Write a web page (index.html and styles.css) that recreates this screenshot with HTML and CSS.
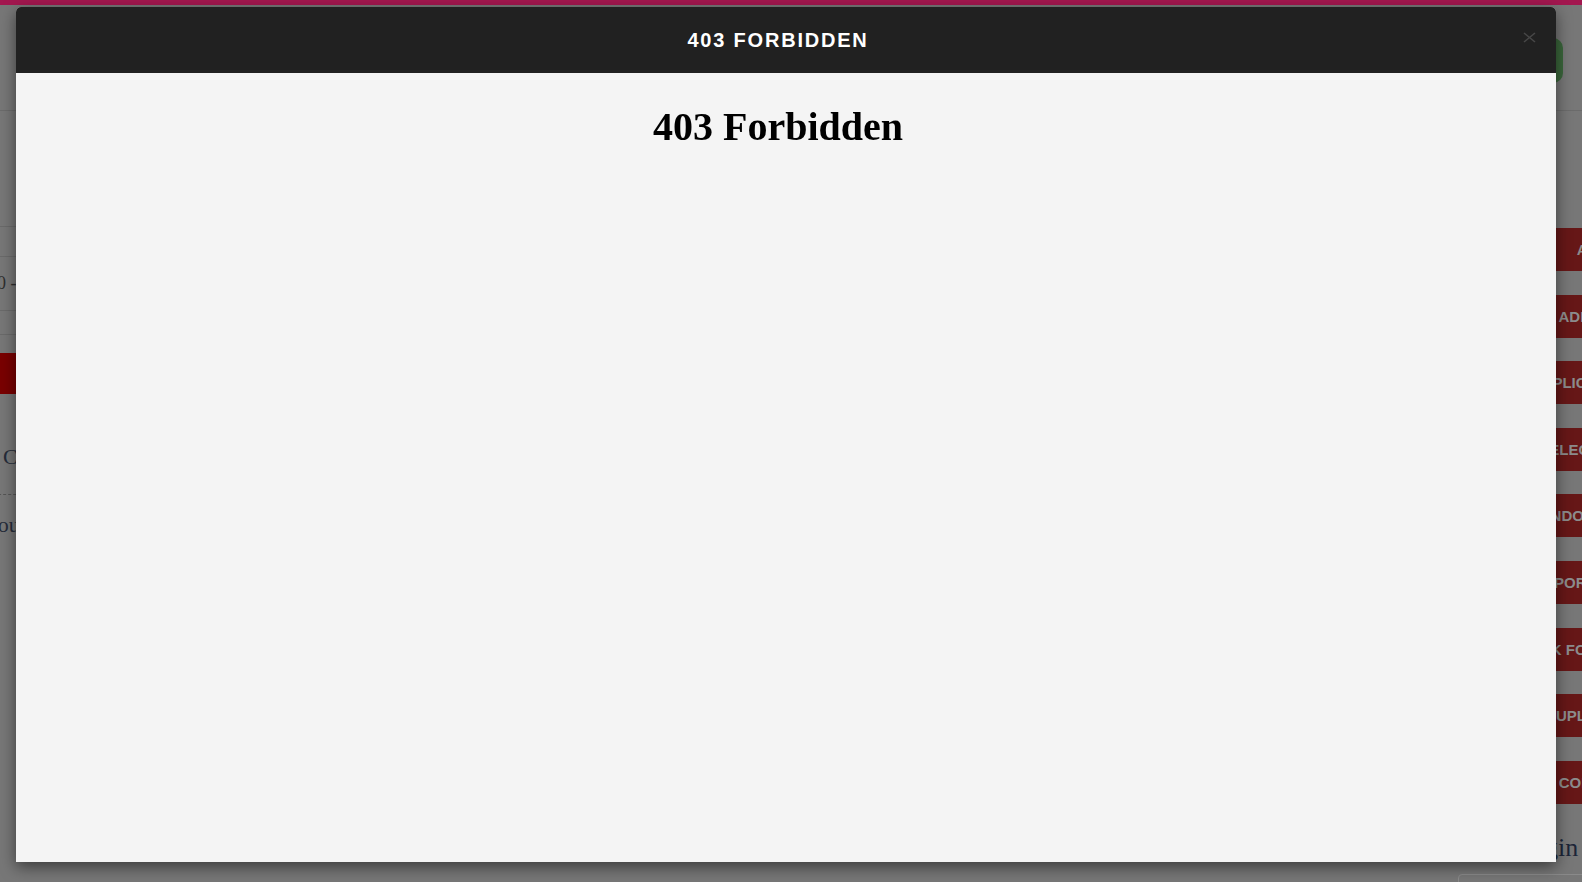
FILE: index.html
```html
<!DOCTYPE html>
<html lang="en">
<head>
    <meta charset="UTF-8">
    <meta name="viewport" content="width=device-width, initial-scale=1.0">
    <title>403 Forbidden</title>
    <link rel="stylesheet" href="styles.css">
</head>
<body>
    <div class="topline"></div>
    <div class="page">
        <header class="site-head">
            <a class="head-btn" href="#">Login</a>
        </header>
        <div class="page-body">
            <aside class="side-left">
                <div class="row row-a"></div>
                <div class="row row-b"></div>
                <div class="row row-c">20 - 21</div>
                <div class="row row-d"></div>
                <div class="red-bar"></div>
                <h3 class="news-title">Circulars</h3>
                <p class="news-text">Your notices</p>
            </aside>
            <main class="main"></main>
            <aside class="side-right">
                <a class="quick" href="#">ALUMNI</a>
                <a class="quick" href="#">ADMISSIONS</a>
                <a class="quick" href="#">APPLICATION FORM</a>
                <a class="quick" href="#">ELECTION 2021</a>
                <a class="quick" href="#">INDOOR GAMES</a>
                <a class="quick" href="#">IMPORTANT LINKS</a>
                <a class="quick" href="#">CLICK FOR ADMISSIONS</a>
                <a class="quick" href="#">UPLOAD FILE</a>
                <a class="quick" href="#">CORPORATE</a>
                <h3 class="side-title">Quick Login</h3>
                <div class="side-box"></div>
            </aside>
        </div>
    </div>

    <!-- modal -->
    <div class="modal">
        <div class="modal-head">
            <h4 class="modal-title">403 FORBIDDEN</h4>
            <button class="close" aria-label="Close">
                <svg width="13" height="11" viewBox="0 0 13 11"><path d="M1 1 L12 10 M12 1 L1 10" stroke="#474747" stroke-width="1.6" fill="none"/></svg>
            </button>
        </div>
        <div class="modal-body">
            <h1>403 Forbidden</h1>
        </div>
    </div>
</body>
</html>
```

FILE: styles.css
```css
html, body {
    margin: 0;
    padding: 0;
}
body {
    background-color: #777;
    font-family: "Liberation Serif", serif;
    overflow: hidden;
    height: 882px;
}
.topline {
    height: 5px;
    background-color: #a3174f;
}
.site-head {
    height: 106px;
    border-bottom: 1px solid #6b6b6b;
    box-sizing: border-box;
    display: flex;
    justify-content: flex-end;
    padding: 33px 19px 0 0;
}
.head-btn {
    display: block;
    width: 90px;
    height: 45px;
    border-radius: 10px;
    background-color: #3a663b;
    color: #8c8c8c;
    text-decoration: none;
}
.page-body {
    display: flex;
}
.side-left {
    width: 220px;
    margin-left: -12px;
    flex-shrink: 0;
}
.row {
    border-bottom: 1px solid #6a6a6a;
    color: #2e2e2e;
    font-size: 18px;
}
.row-a {
    height: 115px;
}
.row-b {
    height: 29px;
}
.row-c {
    height: 53px;
    line-height: 52px;
}
.row-d {
    height: 23px;
}
.red-bar {
    margin-top: 18px;
    height: 41px;
    background-color: #790000;
}
.news-title {
    margin: 50px 0 0;
    padding: 0 0 24px 15px;
    font-size: 22px;
    font-weight: normal;
    color: #262c3a;
    border-bottom: 1px dashed #555;
}
.news-text {
    margin: 17px 0 0 -4px;
    font-size: 22px;
    color: #262c3a;
}
.main {
    flex: 1;
}
.side-right {
    width: 312px;
    flex-shrink: 0;
    margin-right: -180px;
    padding-top: 117px;
    display: flex;
    flex-direction: column;
    gap: 23.6px;
}
.quick {
    display: block;
    height: 43px;
    line-height: 43px;
    background-color: #661717;
    color: #8c8c8c;
    font-family: "Liberation Sans", Arial, sans-serif;
    font-weight: bold;
    font-size: 15px;
    text-align: center;
    white-space: nowrap;
    text-decoration: none;
}
.side-title {
    margin: 6px 0 0 -4px;
    font-size: 26px;
    font-weight: normal;
    color: #1c2538;
}
.side-box {
    margin: -13px 0 0 8px;
    height: 40px;
    border: 1px solid #8a8a8a;
    border-radius: 4px;
}

/* modal */
.modal {
    position: fixed;
    top: 7px;
    left: 16px;
    width: 1540px;
    height: 855px;
    display: flex;
    flex-direction: column;
    background-color: #f4f4f4;
    border-radius: 5px 5px 0 0;
    box-shadow: 0 5px 15px rgba(0,0,0,0.5);
}
.modal-head {
    position: relative;
    height: 66px;
    flex-shrink: 0;
    background-color: #212121;
    border-radius: 5px 5px 0 0;
    display: flex;
    align-items: center;
    justify-content: center;
    padding-right: 16px;
}
.modal-title {
    margin: 0;
    color: #fff;
    font-family: "Liberation Sans", Arial, sans-serif;
    font-weight: bold;
    font-size: 20px;
    letter-spacing: 1.8px;
}
.close {
    position: absolute;
    top: 25px;
    right: 20px;
    padding: 0;
    border: none;
    background: none;
    line-height: 0;
    cursor: pointer;
}
.modal-body {
    flex: 1;
    padding: 30px 16px 0 0;
    text-align: center;
}
.modal-body h1 {
    margin: 0;
    font-family: "Liberation Serif", "Times New Roman", serif;
    font-size: 40px;
    font-weight: bold;
    color: #000;
}
```
